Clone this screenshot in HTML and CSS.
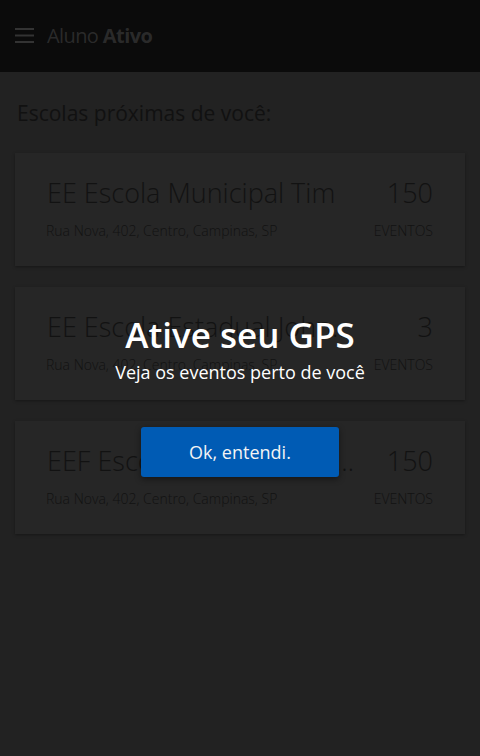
FILE: index.html
```html
<!DOCTYPE html>
<html lang="pt-BR">
<head>
<meta charset="utf-8">
<title>Aluno Ativo</title>
<link rel="stylesheet" href="styles.css">
</head>
<body>
<header class="topbar">
  <svg class="menu-icon" width="19" height="15" viewBox="0 0 19 15" aria-hidden="true">
    <rect x="0" y="0" width="19" height="2"/>
    <rect x="0" y="6.5" width="19" height="2"/>
    <rect x="0" y="13" width="19" height="2"/>
  </svg>
  <div class="brand">Aluno <b>Ativo</b></div>
</header>
<main class="content">
  <h1 class="section-title">Escolas próximas de você:</h1>
  <ul class="school-list">
    <li class="card">
      <div class="card-main">
        <div class="school-name">EE Escola Municipal Tim</div>
        <div class="school-addr">Rua Nova, 402, Centro, Campinas, SP</div>
      </div>
      <div class="card-count">
        <div class="count">150</div>
        <div class="count-label">EVENTOS</div>
      </div>
    </li>
    <li class="card">
      <div class="card-main">
        <div class="school-name">EE Escola Estadual John Kennedy</div>
        <div class="school-addr">Rua Nova, 402, Centro, Campinas, SP</div>
      </div>
      <div class="card-count">
        <div class="count">3</div>
        <div class="count-label">EVENTOS</div>
      </div>
    </li>
    <li class="card">
      <div class="card-main">
        <div class="school-name">EEF Escola Fundamental Paulo Freire</div>
        <div class="school-addr">Rua Nova, 402, Centro, Campinas, SP</div>
      </div>
      <div class="card-count">
        <div class="count">150</div>
        <div class="count-label">EVENTOS</div>
      </div>
    </li>
  </ul>
</main>
<div class="overlay">
  <div class="dialog">
    <h2 class="dialog-title">Ative seu GPS</h2>
    <p class="dialog-text">Veja os eventos perto de você</p>
    <button class="dialog-btn">Ok, entendi.</button>
  </div>
</div>
</body>
</html>
```
FILE: styles.css
```css
* { box-sizing: border-box; }
html, body { margin: 0; padding: 0; }
body {
  background: #222222;
  font-family: "Open Sans", "Noto Sans", sans-serif;
  color: #121212;
  width: 480px;
  height: 756px;
  overflow: hidden;
  position: relative;
}
.topbar {
  height: 72px;
  background: #0b0b0b;
  display: flex;
  align-items: center;
  padding-left: 15px;
  gap: 13px;
}
.menu-icon { fill: #333333; margin-top: -1px; }
.brand {
  font-size: 20px;
  color: #2a2a2a;
  letter-spacing: -0.6px;
  margin-top: -1px;
}
.brand b { font-weight: 700; }
.content { padding: 0 15px; }
.section-title {
  margin: 0;
  padding: 27px 0 0 2px;
  font-size: 21px;
  font-weight: 400;
  color: #111111;
  line-height: 28px;
}
.school-list {
  list-style: none;
  margin: 26px 0 0;
  padding: 0;
  display: flex;
  flex-direction: column;
  gap: 21px;
}
.card {
  height: 113px;
  background: #262626;
  box-shadow: 0 1px 3px rgba(0,0,0,0.35);
  display: flex;
  justify-content: space-between;
  padding: 22px 32px 0 32px;
}
.card-main { min-width: 0; flex: 1; }
.school-name {
  font-size: 27px;
  font-weight: 300;
  line-height: 36px;
  white-space: nowrap;
  overflow: hidden;
  text-overflow: ellipsis;
}
.school-addr {
  font-size: 14px;
  font-weight: 300;
  margin-top: 10px;
  margin-left: -1px;
}
.card-count { text-align: right; padding-left: 18px; }
.count {
  font-size: 27px;
  font-weight: 300;
  line-height: 36px;
}
.count-label {
  font-size: 14px;
  font-weight: 300;
  margin-top: 10px;
}
.overlay {
  position: absolute;
  inset: 0;
  display: flex;
  justify-content: center;
}
.dialog {
  margin-top: 313px;
  display: flex;
  flex-direction: column;
  align-items: center;
}
.dialog-title {
  margin: 0;
  font-size: 35px;
  font-weight: 600;
  color: #ffffff;
  line-height: 44px;
}
.dialog-text {
  margin: 3px 0 0;
  font-size: 18px;
  color: #ffffff;
  line-height: 24px;
}
.dialog-btn {
  margin-top: 43px;
  width: 198px;
  height: 50px;
  border: 0;
  border-radius: 3px;
  background: #005bb4;
  color: #f4f4f4;
  font-family: "Open Sans", "Noto Sans", sans-serif;
  font-size: 18px;
  box-shadow: 0 2px 6px rgba(0,0,0,0.45);
  padding: 0;
}
```
